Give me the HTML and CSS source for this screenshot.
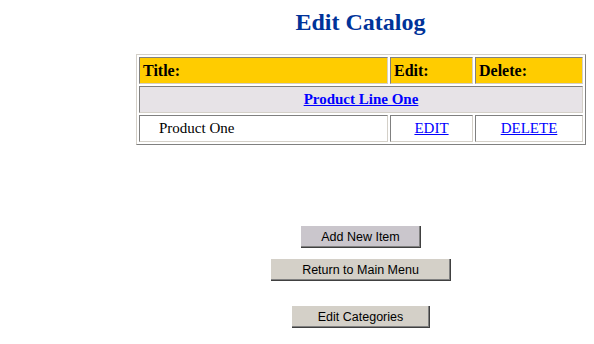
FILE: index.html
```html
<!DOCTYPE html>
<html>
<head>
<meta charset="utf-8">
<title>Edit Catalog</title>
<link rel="stylesheet" href="styles.css">
</head>
<body>
<div class="page">
  <h1 class="title">Edit Catalog</h1>
  <table class="catalog">
    <tr class="head">
      <th class="c-title">Title:</th>
      <th class="c-edit">Edit:</th>
      <th class="c-delete">Delete:</th>
    </tr>
    <tr class="category">
      <td colspan="3"><a href="#">Product Line One</a></td>
    </tr>
    <tr class="item">
      <td class="name">Product One</td>
      <td class="act"><a href="#">EDIT</a></td>
      <td class="act"><a href="#">DELETE</a></td>
    </tr>
  </table>
  <div class="actions">
    <button class="btn btn-add">Add New Item</button>
    <button class="btn btn-return">Return to Main Menu</button>
    <button class="btn btn-cats">Edit Categories</button>
  </div>
</div>
</body>
</html>
```

FILE: styles.css
```css
html, body {
  margin: 0;
  padding: 0;
  background: #ffffff;
}

body {
  font-family: "Liberation Serif", "Times New Roman", serif;
  font-size: 15px;
  color: #000000;
}

.page {
  width: 449px;
  margin-left: 136px;
  padding-top: 9px;
}

.title {
  margin: 0 0 18px 0;
  font-size: 24px;
  line-height: 27px;
  font-weight: bold;
  text-align: center;
  color: #003399;
}

.catalog {
  width: 449px;
  table-layout: fixed;
  border-collapse: separate;
  border-spacing: 2px;
  border: 1px solid;
  border-color: #d4d0c8 #808080 #808080 #d4d0c8;
}

.catalog th,
.catalog td {
  box-sizing: border-box;
  height: 27px;
  padding: 4px 3px;
  line-height: 17px;
  font-size: 15px;
  border: 1px solid;
  border-color: #808080 #d4d0c8 #d4d0c8 #808080;
  white-space: nowrap;
}

.head th {
  background: #ffcc00;
  text-align: left;
  font-weight: bold;
  font-size: 16px;
}

.c-title { width: 249px; }
.c-edit { width: 83px; padding-left: 7px; }
.c-delete { width: 108px; padding-left: 7px; }

.category td {
  background: #e7e3e7;
  text-align: center;
  font-weight: bold;
}

.catalog a {
  color: #0000ff;
  text-decoration: underline;
}

.item td.name {
  padding-left: 19px;
}

.item td.act {
  text-align: center;
}

.actions {
  margin-top: 81px;
  display: flex;
  flex-direction: column;
  align-items: center;
}

.btn {
  display: block;
  box-sizing: border-box;
  height: 22px;
  padding: 0 0 1px 0;
  margin: 0;
  border: none;
  background: #d4d0c8;
  box-shadow: inset -1px -1px #404040, inset -2px -2px #808080;
  font-family: "Liberation Sans", Arial, sans-serif;
  font-size: 12.5px;
  color: #000000;
  text-align: center;
}

.btn-add {
  width: 120px;
  background: #cac6cc;
  margin-bottom: 11px;
}

.btn-return {
  width: 180px;
  margin-bottom: 25px;
}

.btn-cats {
  width: 138px;
}
```
